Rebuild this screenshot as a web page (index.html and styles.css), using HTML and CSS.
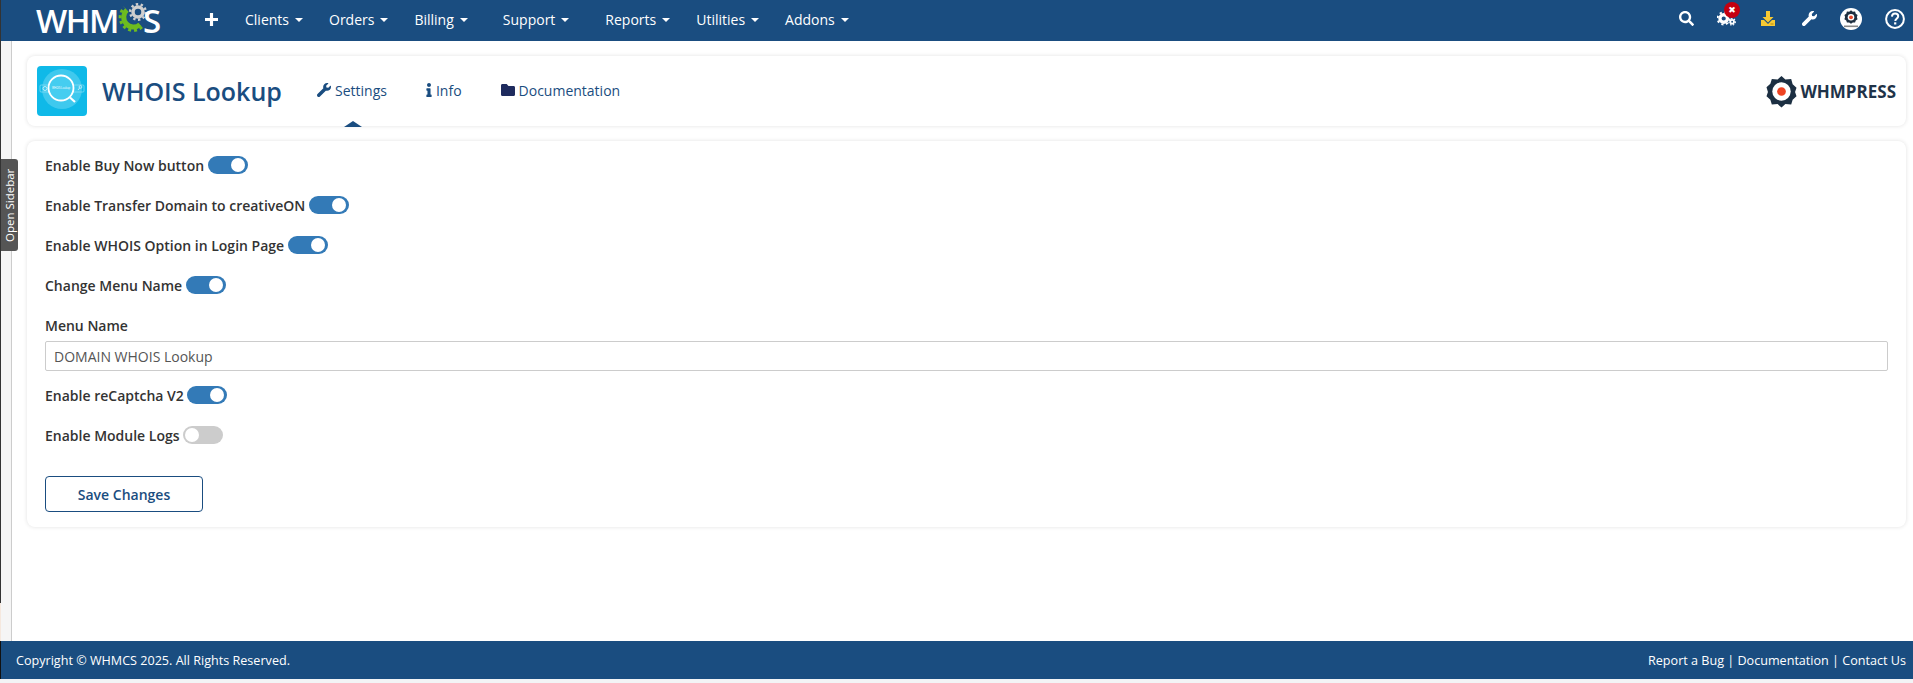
FILE: index.html
```html
<!DOCTYPE html>
<html lang="en">
<head>
<meta charset="utf-8">
<title>WHOIS Lookup</title>
<link rel="stylesheet" href="styles.css">
</head>
<body>
<div class="edge-line"></div>
<header class="navbar">
  <div class="brand">
    <span>WHM</span><svg class="brand-gear" viewBox="0 0 32 32" width="32" height="32"><circle cx="21" cy="9" r="5" fill="none" stroke="#cfcfcf" stroke-width="3.500"/><circle cx="21" cy="9" r="7.800" fill="none" stroke="#cfcfcf" stroke-width="2.400" stroke-dasharray="2.400 2.500"/><path d="M23 21.500A9.500 9.500 0 1 1 10 7" fill="none" stroke="#6dbb1f" stroke-width="5"/><path d="M25 24A12.500 12.500 0 1 1 7.500 4.500" fill="none" stroke="#6dbb1f" stroke-width="3" stroke-dasharray="3 2.800"/></svg><span class="brand-end">S</span>
  </div>
  <nav class="menu">
    <svg class="plus" viewBox="0 0 14 14" width="13" height="13"><path d="M5.300 0h3.400v5.300H14v3.400H8.700V14H5.300V8.700H0V5.300h5.300z" fill="#fff"/></svg>
    <a class="menu-item">Clients<i class="caret"></i></a>
    <a class="menu-item">Orders<i class="caret"></i></a>
    <a class="menu-item">Billing<i class="caret"></i></a>
    <a class="menu-item wide">Support<i class="caret"></i></a>
    <a class="menu-item wider">Reports<i class="caret"></i></a>
    <a class="menu-item">Utilities<i class="caret"></i></a>
    <a class="menu-item">Addons<i class="caret"></i></a>
  </nav>
  <div class="nav-icons">
    <svg class="ni ni-search" viewBox="0 0 512 512" width="15" height="15"><path fill="#fff" d="M505 442.700L405.300 343c-4.500-4.500-10.600-7-17-7H372c27.600-35.300 44-79.700 44-128C416 93.100 322.900 0 208 0S0 93.100 0 208s93.100 208 208 208c48.300 0 92.700-16.400 128-44v16.300c0 6.400 2.500 12.500 7 17l99.700 99.700c9.400 9.400 24.600 9.400 33.900 0l28.300-28.300c9.400-9.400 9.400-24.600.1-34zM208 336c-70.700 0-128-57.200-128-128 0-70.700 57.200-128 128-128 70.700 0 128 57.200 128 128 0 70.700-57.200 128-128 128z"/></svg>
    <span class="gears">
      <svg viewBox="0 0 20 16" width="19" height="15"><circle cx="7" cy="8" r="4" fill="none" stroke="#fff" stroke-width="3.500"/><circle cx="7" cy="8" r="6.500" fill="none" stroke="#fff" stroke-width="2" stroke-dasharray="2.300 2.800"/><circle cx="16" cy="11.500" r="2" fill="none" stroke="#fff" stroke-width="2"/><circle cx="16" cy="11.500" r="3.500" fill="none" stroke="#fff" stroke-width="1.200" stroke-dasharray="1.500 1.500"/></svg>
      <b class="badge">✖</b>
    </span>
    <svg class="ni ni-download" viewBox="0 0 16 16" width="16" height="16"><path fill="#f7c933" d="M6 0h4v6h3.500L8 11.500 2.500 6H6zM1 9h3l4 4 4-4h3v6H1z"/><rect x="10.500" y="12.500" width="3" height="1" fill="#b98a10"/></svg>
    <svg class="ni ni-wrench" viewBox="0 0 512 512" width="15" height="15"><path fill="#fff" d="M507.730 109.100c-2.240-9.030-13.540-12.090-20.120-5.510l-74.360 74.360-67.880-11.310-11.310-67.880 74.360-74.360c6.620-6.620 3.430-17.900-5.660-20.160-47.380-11.740-99.550.91-136.580 37.930-39.640 39.640-50.550 97.100-34.050 147.200L18.740 402.760c-24.990 24.990-24.990 65.510 0 90.500 24.990 24.990 65.510 24.990 90.500 0l213.210-213.210c50.120 16.710 107.470 5.680 147.370-34.220 37.070-37.070 49.700-89.320 37.910-136.730z"/></svg>
    <svg class="ni ni-avatar" viewBox="0 0 22 22" width="22" height="22"><circle cx="11" cy="11" r="11" fill="#fff"/><path d="M11 1.500l2.600 1.900 3.200-.2 1 3 2.600 1.900-1 3 1 3-2.600 1.900-1 3-3.200-.2-2.600 1.900-2.600-1.900-3.200.2-1-3-2.600-1.900 1-3-1-3 2.600-1.900 1-3 3.200.2z" fill="#1e2f40" transform="translate(3.300 1.300) scale(.7)"/><circle cx="11" cy="9.300" r="3.300" fill="#fff"/><circle cx="11" cy="9.300" r="1.900" fill="#e8482a"/><rect x="4" y="17.500" width="14" height="1.600" fill="#888"/></svg>
    <svg class="ni" viewBox="0 0 20 20" width="20" height="20"><circle cx="10" cy="10" r="8.900" fill="none" stroke="#fff" stroke-width="2"/><path d="M6.900 7.600c.2-1.900 1.500-3 3.200-3 1.800 0 3.100 1.100 3.100 2.700 0 1.300-.8 1.900-1.700 2.500-.8.500-1.100.9-1.100 1.800v.4" fill="none" stroke="#fff" stroke-width="2"/><rect x="9.100" y="13.300" width="2.200" height="2.200" fill="#fff"/></svg>
  </div>
</header>

<div class="page">
  <div class="rail"></div>
  <a class="sidebar-tab">Open Sidebar</a>
  <main class="content">
    <section class="card head-card">
      <svg class="module-icon" viewBox="0 0 50 50" width="50" height="50">
        <rect width="50" height="50" rx="4" fill="#0fb9e8"/>
        <circle cx="25" cy="23" r="20" fill="#3fc9ee"/>
        <rect x="3" y="19" width="44" height="7" rx="1" fill="none" stroke="#9be3f6" stroke-width=".6"/>
        <circle cx="8" cy="22.500" r="2" fill="none" stroke="#d6f5fc" stroke-width=".8"/>
        <path d="M41 24l2-2.500" stroke="#d6f5fc" stroke-width=".8"/>
        <circle cx="43.500" cy="21" r="1.400" fill="none" stroke="#d6f5fc" stroke-width=".7"/>
        <circle cx="24" cy="22" r="12.500" fill="#45cdf0" stroke="#fff" stroke-width="1.800"/>
        <path d="M33 31.500l5 4.500" stroke="#fff" stroke-width="2.200"/>
        <text x="24" y="23.400" class="module-icon-text">WHOIS Lookup</text>
      </svg>
      <h1 class="title">WHOIS Lookup</h1>
      <ul class="tabs">
        <li class="tab tab-active">
          <svg viewBox="0 0 512 512" width="14" height="14"><path fill="#1a4d80" d="M507.730 109.100c-2.240-9.030-13.540-12.090-20.120-5.510l-74.360 74.360-67.880-11.310-11.310-67.880 74.360-74.360c6.620-6.620 3.430-17.900-5.660-20.160-47.380-11.740-99.550.91-136.580 37.930-39.640 39.640-50.550 97.100-34.050 147.200L18.740 402.760c-24.990 24.990-24.990 65.510 0 90.500 24.990 24.990 65.510 24.990 90.500 0l213.210-213.210c50.120 16.710 107.470 5.680 147.370-34.220 37.070-37.070 49.700-89.320 37.910-136.730z"/></svg>Settings
        </li>
        <li class="tab tab-info">
          <svg viewBox="0 0 192 512" width="6" height="14"><path fill="#1a4d80" d="M20 424.229h20V279.771H20c-11.046 0-20-8.954-20-20V212c0-11.046 8.954-20 20-20h112c11.046 0 20 8.954 20 20v212.229h20c11.046 0 20 8.954 20 20V492c0 11.046-8.954 20-20 20H20c-11.046 0-20-8.954-20-20v-47.771c0-11.046 8.954-20 20-20zM96 0C56.235 0 24 32.235 24 72s32.235 72 72 72 72-32.235 72-72S135.764 0 96 0z"/></svg>Info
        </li>
        <li class="tab tab-doc">
          <svg viewBox="0 64 512 384" width="14" height="12" preserveAspectRatio="none"><path fill="#1e2b5e" d="M464 128H272l-64-64H48C21.490 64 0 85.490 0 112v288c0 26.510 21.490 48 48 48h416c26.510 0 48-21.490 48-48V176c0-26.510-21.490-48-48-48z"/></svg>Documentation
        </li>
      </ul>
      <div class="whmpress">
        <svg viewBox="0 0 32 34" width="31" height="33"><path d="M16 1l4 3.500 6-.5 1.500 5.500 4 3.500-1.500 4.500 1.500 4.500-4 3.500-1.500 5-6-.5-4 3.500-4-3.500-6 .5-1.500-5-4-3.500L2 17.500.5 12.500l4-3.500L6 4l6 .5z" fill="#1c2f42"/><circle cx="16" cy="17" r="9.500" fill="#fff"/><circle cx="16" cy="17" r="4.500" fill="#ee4423"/></svg>
        <span>WHMPRESS</span>
      </div>
    </section>

    <form class="card form-card">
      <div class="field"><span>Enable Buy Now button</span><i class="switch on"></i></div>
      <div class="field"><span>Enable Transfer Domain to creativeON</span><i class="switch on"></i></div>
      <div class="field"><span>Enable WHOIS Option in Login Page</span><i class="switch on"></i></div>
      <div class="field"><span>Change Menu Name</span><i class="switch on"></i></div>
      <label class="field-label">Menu Name</label>
      <input class="text-input" type="text" value="DOMAIN WHOIS Lookup">
      <div class="field"><span>Enable reCaptcha V2</span><i class="switch on tight"></i></div>
      <div class="field"><span>Enable Module Logs</span><i class="switch tight"></i></div>
      <button class="save" type="button">Save Changes</button>
    </form>
  </main>
</div>

<footer class="footer">
  <span>Copyright © WHMCS 2025. All Rights Reserved.</span>
  <span>Report a Bug | Documentation | Contact Us</span>
</footer>
</body>
</html>
```
FILE: styles.css
```css
* { box-sizing: border-box; }
html, body { margin: 0; height: 683px; overflow: hidden; }
body {
  display: flex;
  flex-direction: column;
  background: #f3f4f6;
  font-family: "Open Sans", "Liberation Sans", sans-serif;
  font-size: 14px;
  color: #333;
  position: relative;
}
.edge-line {
  position: absolute;
  left: 0;
  top: 0;
  width: 1px;
  height: 641px;
  background: linear-gradient(#333 603px, #f5e8de 603px);
  z-index: 5;
}

.navbar {
  height: 41px;
  flex: none;
  background: #1a4d80;
  color: #fff;
  display: flex;
  align-items: center;
  padding-left: 36px;
}
.brand {
  display: flex;
  align-items: center;
  width: 169px;
  height: 41px;
  font-family: "Open Sans", sans-serif;
  font-weight: 600;
  font-size: 33px;
  letter-spacing: -1.5px;
  line-height: 1;
  padding-bottom: 1px;
}
.brand-gear { margin: -2px -6px 0 -1px; flex: none; }
.brand-end { position: relative; }
.menu { display: flex; align-items: center; gap: 26px; }
.plus { margin-right: 1px; margin-top: -3px; }
.menu-item { display: inline-flex; align-items: center; color: #fff; font-size: 14px; padding-bottom: 3px; }
.menu-item.wide { margin-left: 9px; }
.menu-item.wider { margin-left: 10px; }
.caret {
  display: inline-block;
  margin-left: 6px;
  margin-top: 2px;
  border-top: 4px solid #fff;
  border-left: 4px solid transparent;
  border-right: 4px solid transparent;
}
.nav-icons {
  margin-left: auto;
  display: flex;
  align-items: center;
  gap: 24px;
  padding-right: 8px;
  margin-top: -4px;
}
.ni { display: block; }
.ni-search { margin-right: -1px; }
.ni-download { margin-right: 2px; }
.ni-wrench { margin-right: -1px; }
.ni-avatar { margin-right: -1px; }
.gears { position: relative; display: block; height: 15px; }
.gears svg { display: block; }
.badge {
  position: absolute;
  left: 7px;
  top: -9px;
  width: 16px;
  height: 16px;
  border-radius: 50%;
  background: #c40010;
  color: #fff;
  font-size: 9px;
  line-height: 16px;
  text-align: center;
  font-family: "DejaVu Sans", sans-serif;
}

.page { flex: 1; display: flex; background: #fff; position: relative; min-height: 0; }
.rail { width: 12px; flex: none; background: #f5f5f5; border-right: 1px solid #ccc; }
.sidebar-tab {
  position: absolute;
  left: 1px;
  top: 118px;
  width: 17px;
  height: 92px;
  background: #555;
  color: #fff;
  font-size: 11.500px;
  writing-mode: vertical-rl;
  transform: rotate(180deg);
  display: flex;
  align-items: center;
  justify-content: center;
  border-radius: 3px 0 0 3px;
}
.content { flex: 1; padding: 15px 7px 0 15px; display: flex; flex-direction: column; gap: 15px; min-width: 0; }
.card {
  background: #fff;
  border-radius: 8px;
  box-shadow: 0 0 4px rgba(0, 0, 0, .12);
}
.head-card { height: 70px; display: flex; align-items: center; padding: 0 10px; position: relative; }
.module-icon { flex: none; }
.module-icon-text { font-size: 2.600px; fill: #fff; text-anchor: middle; font-family: "Open Sans", sans-serif; }
.title { margin: 0 0 0 15px; font-size: 25px; font-weight: 600; color: #1a4d80; width: 179px; white-space: nowrap; }
.tabs { list-style: none; display: flex; margin: -2px 0 0 36px; padding: 0; color: #1a4d80; font-size: 14px; }
.tab { display: flex; align-items: center; gap: 4px; position: relative; white-space: nowrap; }
.tab-active::after {
  content: "";
  position: absolute;
  left: 27px;
  top: 40px;
  border-bottom: 6px solid #1a4d80;
  border-left: 9px solid transparent;
  border-right: 9px solid transparent;
}
.tab-info { margin-left: 39px; }
.tab-doc { margin-left: 39px; }
.whmpress { margin-left: auto; display: flex; align-items: center; gap: 3px; font-weight: 700; font-size: 17px; color: #1f3349; }

.form-card { height: 386px; padding: 14px 18px 0; }
.field { display: flex; align-items: center; height: 20px; margin-bottom: 20px; font-weight: 600; color: #333; }
.switch {
  display: block;
  margin-left: 4px;
  width: 40px;
  height: 18px;
  border-radius: 9px;
  background: #337ab7;
  position: relative;
}
.switch.tight { margin-left: 3px; }
.switch::after {
  content: "";
  position: absolute;
  right: 3px;
  top: 2px;
  width: 14px;
  height: 14px;
  border-radius: 50%;
  background: #fff;
}
.switch:not(.on) { background: #ccc; }
.switch:not(.on)::after { right: auto; left: 2px; }
.field-label { display: block; height: 21px; padding-top: 1px; line-height: 20px; font-weight: 600; color: #333; margin: 0 0 5px; }
.text-input {
  display: block;
  width: 100%;
  height: 30px;
  border: 1px solid #ccc;
  border-radius: 2px;
  padding: 0 8px;
  margin-bottom: 14px;
  font: 14px "Open Sans", sans-serif;
  color: #555;
  background: #fff;
}
.save {
  display: block;
  margin-top: 31px;
  width: 158px;
  height: 36px;
  background: #fff;
  border: 1px solid #1a4d80;
  border-radius: 4px;
  color: #1a4d80;
  font: 600 14px "Open Sans", sans-serif;
}
.footer {
  flex: none;
  height: 38px;
  margin-bottom: 4px;
  background: #1a4d80;
  border-left: 1px solid #111;
  color: #fff;
  display: flex;
  align-items: center;
  justify-content: space-between;
  padding: 0 7px 0 15px;
  font-size: 12.600px;
}
```
